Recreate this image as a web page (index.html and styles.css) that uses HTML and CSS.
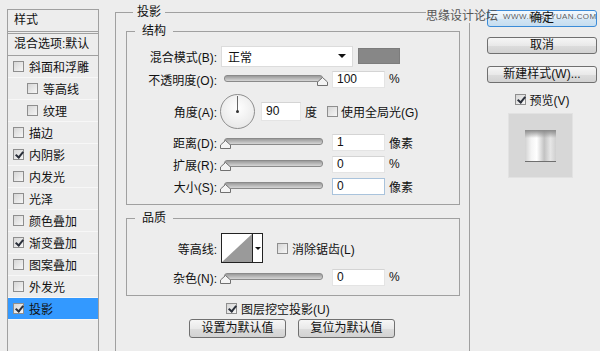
FILE: index.html
```html
<!DOCTYPE html>
<html>
<head>
    <link rel="stylesheet" href="styles.css">
</head>
<body>
    <div class="dialog">
        <div class="sidebar">
            <div class="side-head">样式</div>
            <div class="side-blend">混合选项:默认</div>
            <ul class="side-list">
                <li><span class="cb"></span>斜面和浮雕</li>
                <li class="sub"><span class="cb"></span>等高线</li>
                <li class="sub"><span class="cb"></span>纹理</li>
                <li><span class="cb"></span>描边</li>
                <li><span class="cb on"></span>内阴影</li>
                <li><span class="cb"></span>内发光</li>
                <li><span class="cb"></span>光泽</li>
                <li><span class="cb"></span>颜色叠加</li>
                <li><span class="cb on"></span>渐变叠加</li>
                <li><span class="cb"></span>图案叠加</li>
                <li><span class="cb"></span>外发光</li>
                <li class="active"><span class="cb on"></span>投影</li>
            </ul>
        </div>

        <fieldset class="group">
            <legend>投影</legend>

            <fieldset class="box struct">
                <legend>结构</legend>
                <div class="row">
                    <span class="lbl">混合模式(B):</span>
                    <div class="select">正常<span class="arrow"></span></div>
                    <span class="swatch"></span>
                </div>
                <div class="row tall">
                    <span class="lbl">不透明度(O):</span>
                    <div class="slider"><svg class="thumb" style="left:96px" width="11" height="9" viewBox="0 0 11 9"><path d="M0.5 8.5V5L5.5 0.5L10.5 5V8.5Z"/></svg></div>
                    <span class="field">100</span>
                    <span class="unit">%</span>
                </div>
                <div class="row angle">
                    <span class="lbl">角度(A):</span>
                    <div class="dial"></div>
                    <span class="field small">90</span>
                    <span class="unit">度</span>
                    <span class="cb global"></span>
                    <span class="cb-text">使用全局光(G)</span>
                </div>
                <div class="row">
                    <span class="lbl">距离(D):</span>
                    <div class="slider"><svg class="thumb" style="left:-1px" width="11" height="9" viewBox="0 0 11 9"><path d="M0.5 8.5V5L5.5 0.5L10.5 5V8.5Z"/></svg></div>
                    <span class="field">1</span>
                    <span class="unit">像素</span>
                </div>
                <div class="row">
                    <span class="lbl">扩展(R):</span>
                    <div class="slider"><svg class="thumb" style="left:-1px" width="11" height="9" viewBox="0 0 11 9"><path d="M0.5 8.5V5L5.5 0.5L10.5 5V8.5Z"/></svg></div>
                    <span class="field">0</span>
                    <span class="unit">%</span>
                </div>
                <div class="row">
                    <span class="lbl">大小(S):</span>
                    <div class="slider"><svg class="thumb" style="left:-1px" width="11" height="9" viewBox="0 0 11 9"><path d="M0.5 8.5V5L5.5 0.5L10.5 5V8.5Z"/></svg></div>
                    <span class="field focus">0</span>
                    <span class="unit">像素</span>
                </div>
            </fieldset>

            <fieldset class="box quality">
                <legend>品质</legend>
                <div class="row contour-row">
                    <span class="lbl">等高线:</span>
                    <div class="contour">
                        <svg width="30" height="28" viewBox="0 0 30 28"><polygon points="0,28 30,0 30,28" fill="#9a9a9a"/></svg>
                        <span class="drop"><span class="arrow mini"></span></span>
                    </div>
                    <span class="cb anti"></span>
                    <span class="cb-text">消除锯齿(L)</span>
                </div>
                <div class="row tall">
                    <span class="lbl">杂色(N):</span>
                    <div class="slider"><svg class="thumb" style="left:-1px" width="11" height="9" viewBox="0 0 11 9"><path d="M0.5 8.5V5L5.5 0.5L10.5 5V8.5Z"/></svg></div>
                    <span class="field">0</span>
                    <span class="unit">%</span>
                </div>
            </fieldset>

            <div class="knock"><span class="cb on"></span><span class="cb-text">图层挖空投影(U)</span></div>
            <div class="defaults">
                <span class="btn wide">设置为默认值</span>
                <span class="btn wide">复位为默认值</span>
            </div>
        </fieldset>

        <div class="actions">
            <span class="btn ok">确定</span>
            <span class="btn">取消</span>
            <span class="btn new">新建样式(W)...</span>
            <div class="preview-toggle"><span class="cb on"></span>预览(V)</div>
            <div class="preview"><div class="sample"></div></div>
        </div>
    </div>

    <div class="watermark"><span class="wm-cn">思缘设计论坛</span><span class="wm-en">WWW.MISSYUAN.COM</span></div>
</body>
</html>
```
FILE: styles.css
```css
* {
    box-sizing: border-box;
}
body {
    margin: 0;
    height: 351px;
    overflow: hidden;
    position: relative;
    background: #ededed;
    font-family: "Liberation Sans", "Noto Sans CJK SC", sans-serif;
    font-size: 12px;
    color: #111;
}
.dialog {
    display: flex;
    align-items: flex-start;
}

/* left style list */
.sidebar {
    margin: 9px 0 0 7px;
    width: 92px;
    height: 360px;
    border: 1px solid #a0a0a0;
    border-bottom: none;
}
.side-head {
    height: 22px;
    line-height: 21px;
    padding-left: 6px;
    border-bottom: 1px solid #a0a0a0;
}
.side-blend {
    margin-top: 1px;
    height: 23px;
    line-height: 21px;
    padding-left: 6px;
    border-top: 1px solid #a0a0a0;
    border-bottom: 1px solid #a0a0a0;
    white-space: nowrap;
    overflow: hidden;
}
.side-list {
    list-style: none;
    margin: 0;
    padding: 0;
}
.side-list li {
    height: 22px;
    display: flex;
    align-items: center;
    gap: 5px;
    padding-left: 5px;
    border-bottom: 1px solid #f7f7f7;
}
.side-list li.sub {
    padding-left: 19px;
}
.side-list li.active {
    background: #3399ff;
}

/* checkbox */
.cb {
    position: relative;
    display: inline-block;
    flex: none;
    width: 11px;
    height: 11px;
    border: 1px solid #8e8e8e;
    background: linear-gradient(135deg, #d6d6d6, #f6f6f6);
}
.cb.on::after {
    content: "";
    position: absolute;
    left: 3px;
    top: 0px;
    width: 3px;
    height: 6px;
    border: solid #2a2f3a;
    border-width: 0 2px 2px 0;
    transform: rotate(40deg);
}
.cb-text {
    white-space: nowrap;
}

/* main group */
.group {
    margin: 4px 0 0 16px;
    width: 355px;
    min-height: 360px;
    border: 1px solid #a0a0a0;
    padding: 0 0 0 10px;
}
.group > legend {
    margin-left: 7px;
    padding: 0 4px;
    line-height: 16px;
}
.box {
    width: 334px;
    margin: 3px 0 0 0;
    border: 1px solid #a0a0a0;
    padding: 6px 0 7px 0;
}
.box > legend {
    margin-left: 8px;
    padding: 0 7px;
    line-height: 16px;
}
.quality {
    margin-top: 5px;
    padding: 5px 0 6px 0;
}
.row {
    display: flex;
    align-items: center;
    height: 22px;
}
.row.tall {
    height: 24px;
}
.row.angle {
    height: 40px;
}
.row.contour-row {
    height: 34px;
}
.lbl {
    width: 90px;
    margin-right: 4px;
    text-align: right;
    white-space: nowrap;
}

.select {
    width: 132px;
    height: 21px;
    display: flex;
    align-items: center;
    justify-content: space-between;
    padding: 0 6px;
    background: #fff;
    border: 1px solid #dcdcdc;
}
.arrow {
    width: 0;
    height: 0;
    border-top: 4px solid #111;
    border-left: 4px solid transparent;
    border-right: 4px solid transparent;
}
.arrow.mini {
    border-top-width: 3px;
    border-left-width: 3px;
    border-right-width: 3px;
}
.swatch {
    width: 42px;
    height: 16px;
    margin-left: 5px;
    background: #878787;
    border: 1px solid #7c7c7c;
}

.slider {
    position: relative;
    width: 106px;
    height: 22px;
    margin-right: 5px;
}
.slider::before {
    content: "";
    position: absolute;
    left: 3px;
    right: 4px;
    top: 7px;
    height: 5px;
    border-radius: 3px;
    border: 1px solid #8a8a8a;
    background: linear-gradient(#9a9a9a, #d6d6d6);
}
.thumb {
    position: absolute;
    top: 9px;
}
.thumb path {
    fill: #f4f4f4;
    stroke: #707070;
    stroke-width: 1;
}

.field {
    width: 53px;
    height: 17px;
    line-height: 15px;
    padding-left: 4px;
    background: #fff;
    border: 1px solid #e4e4e4;
    border-top-color: #d4d4d4;
}
.field.small {
    width: 40px;
    height: 19px;
    line-height: 17px;
}
.field.focus {
    border-color: #a9c3dc;
}
.unit {
    margin-left: 4px;
}

.dial {
    position: relative;
    flex: none;
    width: 35px;
    height: 35px;
    margin: 0 6px 0 -1px;
    border-radius: 50%;
    border: 1px solid #8e8e8e;
    background: radial-gradient(circle at 50% 40%, #ffffff, #e2e2e2);
}
.dial::before {
    content: "";
    position: absolute;
    left: 16px;
    top: 1px;
    width: 1px;
    height: 16px;
    background: #666;
}
.dial::after {
    content: "";
    position: absolute;
    left: 15px;
    top: 15px;
    width: 3px;
    height: 3px;
    border-radius: 50%;
    background: #333;
}
.cb.global {
    margin: 0 3px 0 10px;
}

.contour {
    display: flex;
    width: 42px;
    height: 30px;
    background: #fff;
    border: 1px solid #222;
}
.drop {
    flex: 1;
    display: flex;
    align-items: center;
    justify-content: center;
    border-left: 1px solid #222;
}
.cb.anti {
    margin: 0 4px 0 14px;
}

.knock {
    margin-top: 2px;
    height: 20px;
    display: flex;
    align-items: center;
    gap: 4px;
    padding-left: 100px;
}
.defaults {
    margin-top: 1px;
    display: flex;
    gap: 12px;
    padding-left: 63px;
}

/* buttons */
.btn {
    display: block;
    height: 17px;
    line-height: 15px;
    text-align: center;
    border: 1px solid #707070;
    border-radius: 3px;
    background: linear-gradient(#f6f6f6, #e9e9e9 50%, #dddddd 51%, #d2d2d2);
}
.btn.wide {
    width: 97px;
    height: 19px;
    line-height: 17px;
}
.btn.ok {
    border-color: #3c8cd8;
    background: linear-gradient(#f4f9fd, #e2eef8 50%, #d3e6f5 51%, #c6ddef);
}

.actions {
    margin-left: 17px;
    width: 110px;
    padding-top: 10px;
    display: flex;
    flex-direction: column;
    gap: 10px;
}
.actions .new {
    margin-top: 2px;
}
.preview-toggle {
    margin-top: -3px;
    height: 18px;
    display: flex;
    align-items: center;
    justify-content: center;
    gap: 4px;
}
.preview {
    margin: -5px 0 0 21px;
    width: 65px;
    height: 65px;
    display: flex;
    align-items: center;
    justify-content: center;
    background: #d7d7d7;
    border: 1px solid #e2e2e2;
}
.sample {
    width: 31px;
    height: 32px;
    border-bottom: 1px solid #6f6f6f;
    background:
        linear-gradient(#8a8a8a, rgba(200,200,200,0) 8px),
        linear-gradient(90deg, #d2d2d2, #f4f4f4 20%, #ffffff 38%, #c2c2c2 62%, #e6e6e6 82%, #cfcfcf);
}

/* site watermark stamped over the top right corner */
.watermark {
    position: absolute;
    top: 9px;
    left: 426px;
    display: flex;
    align-items: center;
    pointer-events: none;
}
.wm-cn {
    line-height: 14px;
    color: #555;
    background: linear-gradient(90deg, #ededed 60px, transparent 60px);
}
.wm-en {
    margin-left: 5px;
    padding-top: 1px;
    font-size: 8px;
    letter-spacing: 0.4px;
    color: rgba(40, 40, 40, 0.75);
}
```
